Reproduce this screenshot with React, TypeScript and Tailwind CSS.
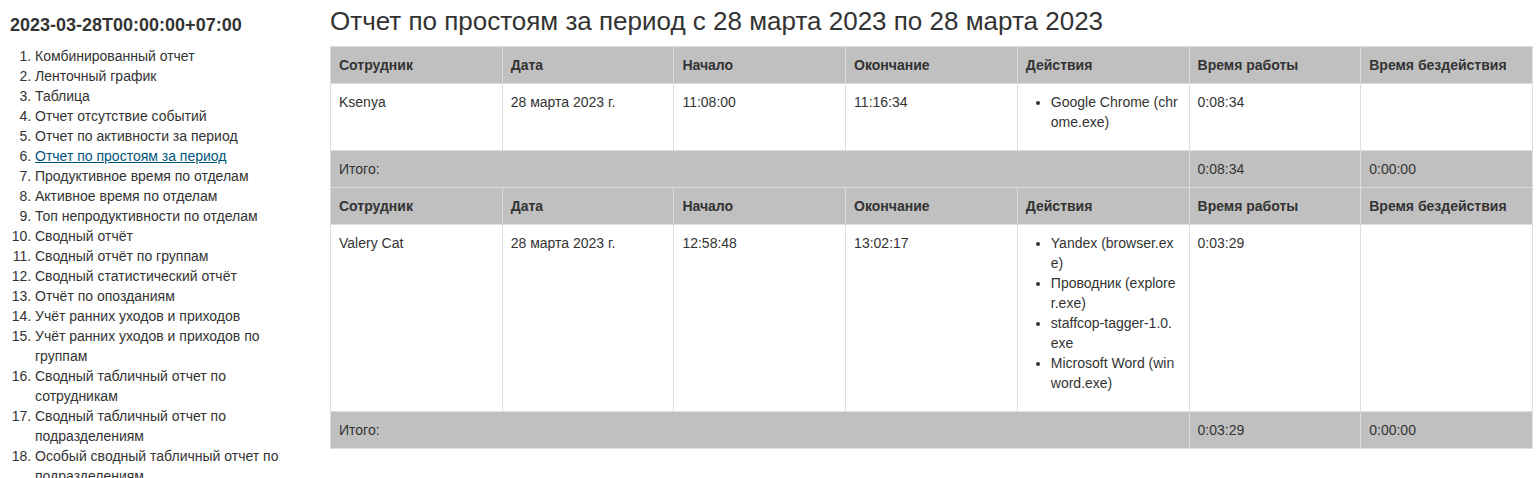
import React from 'react';

type Row = {
  employee: string;
  date: string;
  start: string;
  end: string;
  actions: string[];
  work: string;
  idle: string;
};

const reports = [
  'Комбинированный отчет',
  'Ленточный график',
  'Таблица',
  'Отчет отсутствие событий',
  'Отчет по активности за период',
  'Отчет по простоям за период',
  'Продуктивное время по отделам',
  'Активное время по отделам',
  'Топ непродуктивности по отделам',
  'Сводный отчёт',
  'Сводный отчёт по группам',
  'Сводный статистический отчёт',
  'Отчёт по опозданиям',
  'Учёт ранних уходов и приходов',
  'Учёт ранних уходов и приходов по группам',
  'Сводный табличный отчет по сотрудникам',
  'Сводный табличный отчет по подразделениям',
  'Особый сводный табличный отчет по подразделениям',
];

const rows: Row[] = [
  {
    employee: 'Ksenya',
    date: '28 марта 2023 г.',
    start: '11:08:00',
    end: '11:16:34',
    actions: ['Google Chrome (chrome.exe)'],
    work: '0:08:34',
    idle: '0:00:00',
  },
  {
    employee: 'Valery Cat',
    date: '28 марта 2023 г.',
    start: '12:58:48',
    end: '13:02:17',
    actions: [
      'Yandex (browser.exe)',
      'Проводник (explorer.exe)',
      'staffcop-tagger-1.0.exe',
      'Microsoft Word (winword.exe)',
    ],
    work: '0:03:29',
    idle: '0:00:00',
  },
];

const headers = ['Сотрудник', 'Дата', 'Начало', 'Окончание', 'Действия', 'Время работы', 'Время бездействия'];

const cell = 'border border-[#dddddd] px-[8px] py-[8px] align-top text-left leading-[20px]';

export default function App() {
  return (
    <div className="flex min-h-[478px] bg-white text-[14px] leading-[20px] text-[#333333] font-['Liberation_Sans',Arial,sans-serif]">
      {/* Sidebar */}
      <div className="w-[310px] shrink-0 pl-[10px] pr-[10px] pt-[15px]">
        <h4 className="text-[18px] font-bold leading-[20px] mb-[11px]">2023-03-28T00:00:00+07:00</h4>
        <ol className="list-decimal ml-[25px]">
          {reports.map((r, i) => (
            <li key={i} className="leading-[20px]">
              {i === 5 ? (
                <a href="#" className="text-[#005580] underline">{r}</a>
              ) : (
                r
              )}
            </li>
          ))}
        </ol>
      </div>

      {/* Main */}
      <div className="flex-1 pl-[20px] pr-[7px] pt-[1px]">
        <h3 className="text-[26px] leading-[40px] font-normal mb-[5px]">
          Отчет по простоям за период с 28 марта 2023 по 28 марта 2023
        </h3>
        <table className="w-full table-fixed border-collapse border border-[#dddddd]">
          <tbody>
            {rows.map((row, idx) => (
              <React.Fragment key={idx}>
                <tr className="bg-[#c0c0c0]">
                  {headers.map((h) => (
                    <th key={h} className={`${cell} font-bold`}>{h}</th>
                  ))}
                </tr>
                <tr className="bg-white">
                  <td className={cell}>{row.employee}</td>
                  <td className={cell}>{row.date}</td>
                  <td className={cell}>{row.start}</td>
                  <td className={cell}>{row.end}</td>
                  <td className={cell}>
                    <ul className="list-disc ml-[25px] mr-[2px] mb-[10px] break-all">
                      {row.actions.map((a) => (
                        <li key={a}>{a}</li>
                      ))}
                    </ul>
                  </td>
                  <td className={cell}>{row.work}</td>
                  <td className={cell}></td>
                </tr>
                <tr className="bg-[#c0c0c0]">
                  <td className={cell} colSpan={5}>Итого:</td>
                  <td className={cell}>{row.work}</td>
                  <td className={cell}>{row.idle}</td>
                </tr>
              </React.Fragment>
            ))}
          </tbody>
        </table>
      </div>
    </div>
  );
}
